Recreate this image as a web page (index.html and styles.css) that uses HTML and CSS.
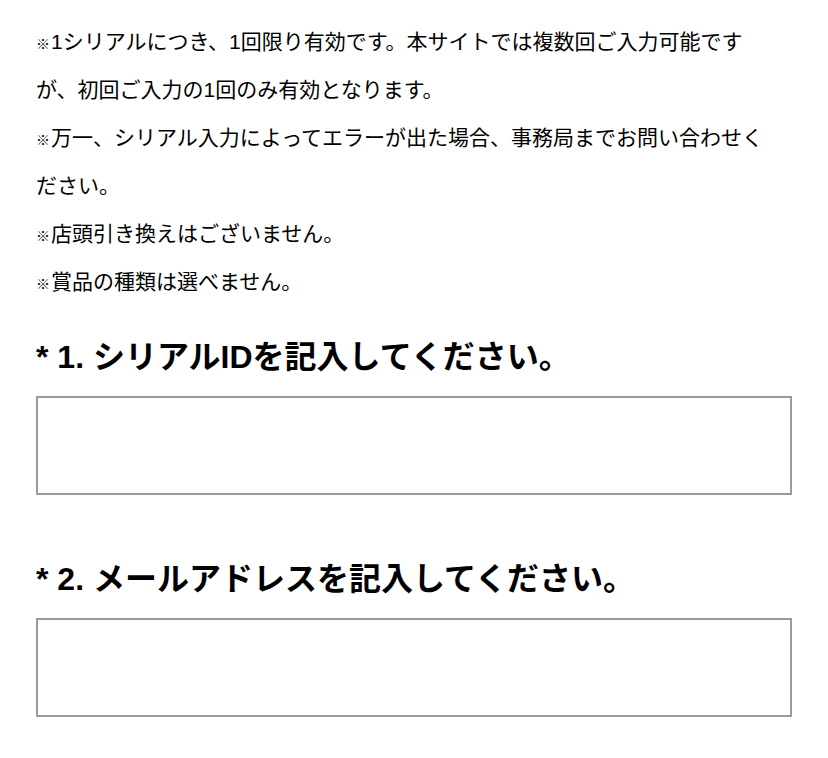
FILE: index.html
```html
<!DOCTYPE html>
<html lang="ja">
<head>
<meta charset="utf-8">
<title>シリアル入力</title>
<link rel="stylesheet" href="styles.css">
</head>
<body>
<main class="page">
  <div class="notes">
    <p><span class="mark">※</span>1シリアルにつき、1回限り有効です。本サイトでは複数回ご入力可能ですが、初回ご入力の1回のみ有効となります。</p>
    <p><span class="mark">※</span>万一、シリアル入力によってエラーが出た場合、事務局までお問い合わせください。</p>
    <p><span class="mark">※</span>店頭引き換えはございません。</p>
    <p><span class="mark">※</span>賞品の種類は選べません。</p>
  </div>
  <section class="question">
    <h2 class="q-title">* 1. シリアルIDを記入してください。</h2>
    <input class="q-input" type="text" aria-label="シリアルID">
  </section>
  <section class="question">
    <h2 class="q-title">* 2. メールアドレスを記入してください。</h2>
    <input class="q-input" type="text" aria-label="メールアドレス">
  </section>
</main>
</body>
</html>
```
FILE: styles.css
```css
html, body {
  margin: 0;
  padding: 0;
  background: #fff;
}
body {
  font-family: "Liberation Sans", "Noto Sans CJK JP", sans-serif;
  color: #000;
}
.page {
  width: 756px;
  padding: 18px 36px 0 36px;
}
.notes {
  width: 740px;
}
.notes p {
  margin: 0;
  font-size: 21px;
  line-height: 48px;
}
.mark {
  font-family: "Noto Sans CJK JP", sans-serif;
  font-size: 14px;
  line-height: 1;
  margin-right: 1px;
}
.question {
  display: flex;
  flex-direction: column;
}
.q-title {
  height: 40px;
  margin: 31px 0 19px 0;
  font-size: 32px;
  line-height: 40px;
  font-weight: bold;
  overflow: visible;
}
.question + .question .q-title {
  margin-top: 64px;
}
.q-input {
  box-sizing: border-box;
  width: 756px;
  height: 99px;
  margin: 0;
  border: 2px solid #9b9b9b;
  border-radius: 0;
  background: #fff;
  outline: none;
}
```
